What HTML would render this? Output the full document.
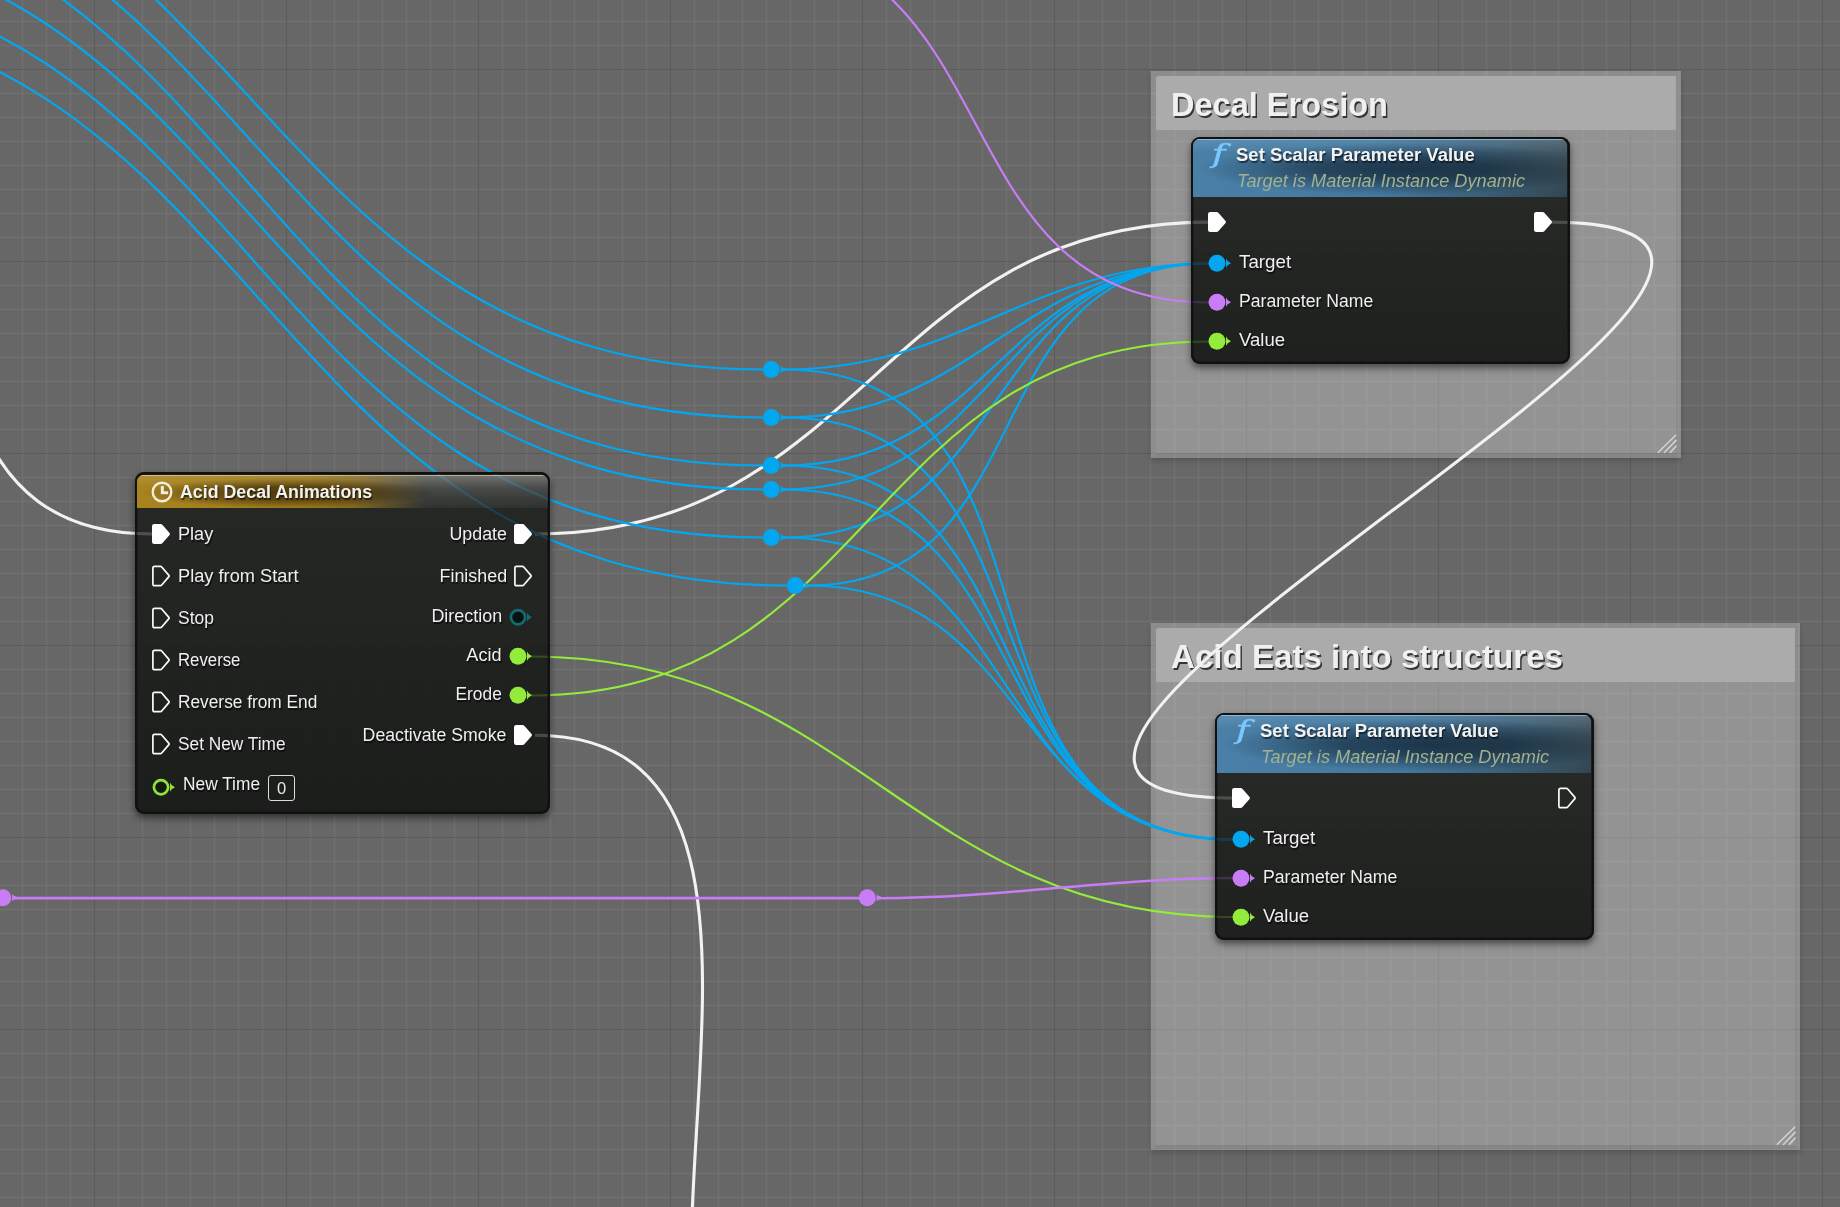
<!DOCTYPE html>
<html><head><meta charset="utf-8"><title>Blueprint</title>
<style>
html,body{margin:0;padding:0}
body{width:1840px;height:1207px;overflow:hidden;position:relative;background-color:#676767;
font-family:"Liberation Sans",sans-serif;
background-image:
linear-gradient(90deg,rgba(90,90,90,0) .4px,#5b5b5b 1px,#5b5b5b 2px,rgba(90,90,90,0) 2.6px),
linear-gradient(180deg,rgba(90,90,90,0) .4px,#5b5b5b 1px,#5b5b5b 2px,rgba(90,90,90,0) 2.6px),
linear-gradient(90deg,rgba(113,113,113,0) .4px,#717171 1px,#717171 2px,rgba(113,113,113,0) 2.6px),
linear-gradient(180deg,rgba(113,113,113,0) .4px,#717171 1px,#717171 2px,rgba(113,113,113,0) 2.6px);
background-size:192px 192px,192px 192px,24px 24px,24px 24px;
background-position:93px 0,0 68px,21px 0,0 20px;}
#w{position:absolute;left:0;top:0}
#w,#w2{fill:none;position:absolute;left:0;top:0}
.cmt{position:absolute;background:rgba(255,255,255,.295);background-clip:padding-box;border:5px solid rgba(255,255,255,.25);border-bottom-color:rgba(255,255,255,.2);border-right-color:rgba(255,255,255,.235);box-shadow:0 3px 5px rgba(0,0,0,.16)}
.ct{will-change:transform;position:absolute;left:0;right:0;top:0;height:53.5px;background:#ababab;border-radius:3px 0 0 0}
.ctt{position:absolute;left:15.3px;top:8.5px;font-size:33.5px;line-height:40px;font-weight:bold;color:#f0f0f0;white-space:nowrap;text-shadow:1.5px 2px 0 rgba(40,40,40,.9);transform-origin:0 50%}
.rs{position:absolute;right:-4.4px;bottom:-2.2px}
.nbg{position:absolute;background:linear-gradient(180deg,rgba(33,36,33,.93),rgba(23,25,23,.94));border-radius:9px;box-shadow:0 0 0 2.5px #101110 inset,0 4px 7px rgba(0,0,0,.5)}
.node{position:absolute;will-change:transform}
.ni{position:absolute}
.title{position:absolute;left:2.5px;right:2.5px;top:2.8px;border-radius:6.5px 6.5px 0 0;overflow:hidden;background:linear-gradient(180deg,rgba(255,255,255,.27),rgba(255,255,255,.13) 55%,rgba(255,255,255,.05))}
.title i{position:absolute;left:0;right:0;top:0;bottom:0;display:block}
.title.gold{height:33.5px}
.title.blue{height:57.5px}
.gold .spill{background:linear-gradient(90deg,#a8841f 0%,#9c7a1e 42%,rgba(150,116,28,.8) 53%,rgba(140,110,30,0) 70%)}
.gold .gloss{left:1%;right:27%;top:10%;bottom:2%;background:radial-gradient(ellipse 50% 50% at 50% 50%,rgba(25,14,0,.6) 0%,rgba(25,14,0,.52) 40%,rgba(25,14,0,.22) 75%,rgba(25,14,0,0) 100%)}
.gold .hl{background:linear-gradient(180deg,rgba(255,240,190,.55) 0,rgba(255,240,190,.55) 1.2px,rgba(255,255,255,.10) 1.4px,rgba(255,255,255,0) 12px)}
.blue .spill{background:linear-gradient(90deg,#4a80a8 0%,#44789e 50%,rgba(60,105,138,.85) 75%,rgba(50,85,108,.55) 100%)}
.blue .gloss{left:1%;right:-12%;top:6%;bottom:4%;background:radial-gradient(ellipse 50% 50% at 50% 50%,rgba(5,15,25,.62) 0%,rgba(5,15,25,.5) 40%,rgba(5,15,25,.2) 75%,rgba(5,15,25,0) 100%)}
.blue .hl{background:linear-gradient(180deg,rgba(150,205,245,.75) 0,rgba(150,205,245,.75) 1.2px,rgba(255,255,255,.10) 1.4px,rgba(255,255,255,0) 14px)}
.tt{position:absolute;z-index:2;font-weight:bold;font-size:18px;line-height:22px;color:#f2f2f2;white-space:nowrap;text-shadow:1px 1.5px 1px rgba(0,0,0,.55);transform-origin:0 50%}
.gold .tt{left:42.8px;top:6.5px}
.clk{position:absolute;z-index:2;left:12.6px;top:5.2px}
.blue .tt{left:43.1px;top:5.2px}
.st{position:absolute;z-index:2;left:44.2px;top:31px;font-style:italic;font-size:18px;line-height:22px;color:#a3b18c;white-space:nowrap;transform-origin:0 50%}
.fi{position:absolute;z-index:2;left:18.5px;top:-3.4px;font-family:"DejaVu Serif",serif;font-style:italic;font-size:26.5px;line-height:36px;color:#7ac8ff;-webkit-text-stroke:.4px #7ac8ff;transform:scaleX(1.38);transform-origin:0 50%}
.row{position:absolute;height:0;white-space:nowrap;left:0;right:0}
.lb{position:absolute;top:-11.4px;font-size:18.3px;line-height:22px;color:#efefef;text-shadow:1px 1.5px 1px rgba(0,0,0,.65);white-space:nowrap}
.row.l .ex{position:absolute;left:16.3px;top:-12px}
.row.l .lb{left:43.6px;transform-origin:0 50%}
.row.l.dl .dp{position:absolute;left:17.3px;top:-9.2px}
.row.l.dl .lb{left:48.2px;top:-12px}
.row.l.nt .lb{left:48.9px;top:-14px}
.row.r .ex{position:absolute;right:17.3px;top:-12px}
.row.r .dp{position:absolute;right:17.3px;top:-9.2px}
.row.r.e .lb{right:43.3px;transform-origin:100% 50%}
.row.r.d .lb{right:48px;top:-12.2px;transform-origin:100% 50%}
.box{position:absolute;left:133.5px;top:-12px;width:25px;height:23.5px;border:1.5px solid #dcdcdc;border-radius:3px;color:#e6e6e6;font-size:16.5px;line-height:25px;text-align:center}
</style></head><body>
<div class="cmt" style="left:1151.0px;top:70.5px;width:520.0px;height:377.0px"><div class="ct"><span class="ctt" style="transform:scaleX(0.9709)">Decal Erosion</span></div><svg class="rs" width="24" height="24" viewBox="0 0 24 24"><path d="M2.3 21.3 L19.7 4.2 M8.6 21.3 L20 9.4 M14.4 21.3 L20 15.2" stroke="#d2d2d2" stroke-width="1.6" stroke-linecap="round" fill="none"/></svg></div><div class="cmt" style="left:1151.0px;top:622.5px;width:639.0px;height:517.5px"><div class="ct"><span class="ctt" style="transform:scaleX(0.9886)">Acid Eats into structures</span></div><svg class="rs" width="24" height="24" viewBox="0 0 24 24"><path d="M2.3 21.3 L19.7 4.2 M8.6 21.3 L20 9.4 M14.4 21.3 L20 15.2" stroke="#d2d2d2" stroke-width="1.6" stroke-linecap="round" fill="none"/></svg></div><svg id="w" width="1840" height="1207" viewBox="0 0 1840 1207"><g id="wg"><path d="M535.0 534.0 C863.6 534.0 880.4 222.1 1209.0 222.1" stroke="#f2f2f2" stroke-width="3.10"/><path d="M1550.0 222.1 C2000.0 222.1 786.0 798.1 1236.0 798.1" stroke="#f2f2f2" stroke-width="3.10"/><path d="M-260.0 -230.0 C132.0 -230.0 -240.0 534.0 152.0 534.0" stroke="#f2f2f2" stroke-width="3.10"/><path d="M535.0 735.3 C906.6 735.3 486.4 1527.0 858.0 1527.0" stroke="#f2f2f2" stroke-width="3.10"/><path d="M-267.0 -178.0 C258.9 -178.0 237.4 369.5 763.3 369.5" stroke="#03a6ef" stroke-width="2.20"/><path d="M-262.0 -137.0 C264.6 -137.0 236.7 417.5 763.3 417.5" stroke="#03a6ef" stroke-width="2.20"/><path d="M-271.0 -105.0 C263.9 -105.0 228.4 465.5 763.3 465.5" stroke="#03a6ef" stroke-width="2.20"/><path d="M-268.5 -66.0 C260.6 -66.0 234.2 489.5 763.3 489.5" stroke="#03a6ef" stroke-width="2.20"/><path d="M-263.0 -24.0 C266.3 -24.0 234.0 537.5 763.3 537.5" stroke="#03a6ef" stroke-width="2.20"/><path d="M-271.0 10.0 C273.6 10.0 242.7 585.5 787.3 585.5" stroke="#03a6ef" stroke-width="2.20"/><path d="M783.3 369.5 C960.5 369.5 1031.8 263.5 1209.0 263.5" stroke="#03a6ef" stroke-width="2.20"/><path d="M783.3 369.5 C1089.9 369.5 926.4 839.5 1233.0 839.5" stroke="#03a6ef" stroke-width="2.20"/><path d="M783.3 417.5 C976.5 417.5 1015.8 263.5 1209.0 263.5" stroke="#03a6ef" stroke-width="2.20"/><path d="M783.3 417.5 C1073.9 417.5 942.4 839.5 1233.0 839.5" stroke="#03a6ef" stroke-width="2.20"/><path d="M783.3 465.5 C992.5 465.5 999.8 263.5 1209.0 263.5" stroke="#03a6ef" stroke-width="2.20"/><path d="M783.3 465.5 C1057.9 465.5 958.4 839.5 1233.0 839.5" stroke="#03a6ef" stroke-width="2.20"/><path d="M783.3 489.5 C1000.5 489.5 991.8 263.5 1209.0 263.5" stroke="#03a6ef" stroke-width="2.20"/><path d="M783.3 489.5 C1049.9 489.5 966.4 839.5 1233.0 839.5" stroke="#03a6ef" stroke-width="2.20"/><path d="M783.3 537.5 C1016.5 537.5 975.8 263.5 1209.0 263.5" stroke="#03a6ef" stroke-width="2.20"/><path d="M783.3 537.5 C1033.9 537.5 982.4 839.5 1233.0 839.5" stroke="#03a6ef" stroke-width="2.20"/><path d="M807.3 585.5 C1048.5 585.5 967.8 263.5 1209.0 263.5" stroke="#03a6ef" stroke-width="2.20"/><path d="M807.3 585.5 C1033.9 585.5 1006.4 839.5 1233.0 839.5" stroke="#03a6ef" stroke-width="2.20"/><path d="M531.0 656.5 C851.8 656.5 912.2 917.0 1233.0 917.0" stroke="#93ec3b" stroke-width="2.20"/><path d="M531.0 695.5 C875.0 695.5 865.0 341.5 1209.0 341.5" stroke="#93ec3b" stroke-width="2.20"/><path d="M741.0 -57.0 C1016.8 -57.0 933.2 302.5 1209.0 302.5" stroke="#c87df6" stroke-width="2.20"/><path d="M14.0 898.2 C296.0 898.2 578.0 898.2 860.0 898.2" stroke="#c87df6" stroke-width="2.80"/><path d="M879.0 898.2 C1003.7 898.2 1108.3 878.0 1233.0 878.0" stroke="#c87df6" stroke-width="2.50"/></g><circle cx="771.3" cy="369.5" r="8.5" fill="#03a6ef"/><path d="M780.6 365.5 q.6 2 4.4 2.8 v2.4 q-3.8 .8 -4.4 2.8z" fill="#03a6ef"/><circle cx="771.3" cy="417.5" r="8.5" fill="#03a6ef"/><path d="M780.6 413.5 q.6 2 4.4 2.8 v2.4 q-3.8 .8 -4.4 2.8z" fill="#03a6ef"/><circle cx="771.3" cy="465.5" r="8.5" fill="#03a6ef"/><path d="M780.6 461.5 q.6 2 4.4 2.8 v2.4 q-3.8 .8 -4.4 2.8z" fill="#03a6ef"/><circle cx="771.3" cy="489.5" r="8.5" fill="#03a6ef"/><path d="M780.6 485.5 q.6 2 4.4 2.8 v2.4 q-3.8 .8 -4.4 2.8z" fill="#03a6ef"/><circle cx="771.3" cy="537.5" r="8.5" fill="#03a6ef"/><path d="M780.6 533.5 q.6 2 4.4 2.8 v2.4 q-3.8 .8 -4.4 2.8z" fill="#03a6ef"/><circle cx="795.3" cy="585.5" r="8.5" fill="#03a6ef"/><path d="M804.6 581.5 q.6 2 4.4 2.8 v2.4 q-3.8 .8 -4.4 2.8z" fill="#03a6ef"/><circle cx="2.8" cy="897.8" r="8.5" fill="#c87df6"/><path d="M12.1 893.8 q.6 2 4.4 2.8 v2.4 q-3.8 .8 -4.4 2.8z" fill="#c87df6"/><circle cx="867.3" cy="897.8" r="8.5" fill="#c87df6"/><path d="M876.6 893.8 q.6 2 4.4 2.8 v2.4 q-3.8 .8 -4.4 2.8z" fill="#c87df6"/></svg>
<div class="nbg" style="left:134.5px;top:472.0px;width:415.5px;height:342px"></div><div class="nbg" style="left:1190.5px;top:136.5px;width:379px;height:227px"></div><div class="nbg" style="left:1214.5px;top:712.5px;width:379px;height:227px"></div><svg id="w2" width="1840" height="1207" viewBox="0 0 1840 1207"><defs><clipPath id="nc"><rect x="136.5" y="474.0" width="411.5" height="338.0" rx="8"/><rect x="1192.5" y="138.5" width="375.0" height="223.0" rx="8"/><rect x="1216.5" y="714.5" width="375.0" height="223.0" rx="8"/></clipPath></defs><g clip-path="url(#nc)" opacity=".17"><use href="#wg"/></g></svg>
<div class="node" style="left:134px;top:472px;width:416px;height:342px"><div class="ni" style="left:.5px;top:0;right:0;bottom:0"><div class="title gold"><i class="spill"></i><i class="gloss"></i><i class="hl"></i><svg class="clk" width="24" height="24" viewBox="0 0 24 24"><circle cx="12" cy="12" r="9.3" fill="none" stroke="#f1ece0" stroke-width="2.4"/><path d="M12.3 6 V12.7 H18.2" fill="none" stroke="#f1ece0" stroke-width="3"/></svg><span class="tt" style="transform:scaleX(0.9883)">Acid Decal Animations</span></div><div class="row l" style="top:62.0px"><svg class="ex" width="20" height="24" viewBox="0 0 20 24"><path d="M3.2 2 H9.6 Q10.6 2 11.3 2.8 L18.6 10.9 Q19.4 12 18.6 13.1 L11.3 21.2 Q10.6 22 9.6 22 H3.2 Q1 22 1 19.8 V4.2 Q1 2 3.2 2Z" fill="#fff"/></svg><span class="lb" style="transform:scaleX(0.9916)">Play</span></div><div class="row l" style="top:104.0px"><svg class="ex" width="20" height="24" viewBox="0 0 20 24"><path d="M3.6 2.4 H9.5 Q10.2 2.4 10.7 3 L17.9 11.4 Q18.4 12 17.9 12.6 L10.7 21 Q10.2 21.6 9.5 21.6 H3.6 Q1.9 21.6 1.9 19.9 V4.1 Q1.9 2.4 3.6 2.4Z" fill="none" stroke="#fafafa" stroke-width="1.7" stroke-linejoin="round"/></svg><span class="lb" style="transform:scaleX(0.9974)">Play from Start</span></div><div class="row l" style="top:146.0px"><svg class="ex" width="20" height="24" viewBox="0 0 20 24"><path d="M3.6 2.4 H9.5 Q10.2 2.4 10.7 3 L17.9 11.4 Q18.4 12 17.9 12.6 L10.7 21 Q10.2 21.6 9.5 21.6 H3.6 Q1.9 21.6 1.9 19.9 V4.1 Q1.9 2.4 3.6 2.4Z" fill="none" stroke="#fafafa" stroke-width="1.7" stroke-linejoin="round"/></svg><span class="lb" style="transform:scaleX(0.9536)">Stop</span></div><div class="row l" style="top:188.0px"><svg class="ex" width="20" height="24" viewBox="0 0 20 24"><path d="M3.6 2.4 H9.5 Q10.2 2.4 10.7 3 L17.9 11.4 Q18.4 12 17.9 12.6 L10.7 21 Q10.2 21.6 9.5 21.6 H3.6 Q1.9 21.6 1.9 19.9 V4.1 Q1.9 2.4 3.6 2.4Z" fill="none" stroke="#fafafa" stroke-width="1.7" stroke-linejoin="round"/></svg><span class="lb" style="transform:scaleX(0.9172)">Reverse</span></div><div class="row l" style="top:230.0px"><svg class="ex" width="20" height="24" viewBox="0 0 20 24"><path d="M3.6 2.4 H9.5 Q10.2 2.4 10.7 3 L17.9 11.4 Q18.4 12 17.9 12.6 L10.7 21 Q10.2 21.6 9.5 21.6 H3.6 Q1.9 21.6 1.9 19.9 V4.1 Q1.9 2.4 3.6 2.4Z" fill="none" stroke="#fafafa" stroke-width="1.7" stroke-linejoin="round"/></svg><span class="lb" style="transform:scaleX(0.9459)">Reverse from End</span></div><div class="row l" style="top:272.0px"><svg class="ex" width="20" height="24" viewBox="0 0 20 24"><path d="M3.6 2.4 H9.5 Q10.2 2.4 10.7 3 L17.9 11.4 Q18.4 12 17.9 12.6 L10.7 21 Q10.2 21.6 9.5 21.6 H3.6 Q1.9 21.6 1.9 19.9 V4.1 Q1.9 2.4 3.6 2.4Z" fill="none" stroke="#fafafa" stroke-width="1.7" stroke-linejoin="round"/></svg><span class="lb" style="transform:scaleX(0.9455)">Set New Time</span></div><div class="row l dl nt" style="top:315.0px"><svg class="dp" width="24" height="19" viewBox="0 0 24 19"><circle cx="9" cy="9.2" r="7.1" fill="#141a10" stroke="#8fe33a" stroke-width="2.7"/><path d="M18 4.6 Q19 7.6 23 9.2 Q19 10.8 18 13.8Z" fill="#8fe33a"/></svg><span class="lb" style="transform:scaleX(0.9478)">New Time</span><span class="box">0</span></div><div class="row r e" style="top:62.0px"><span class="lb" style="transform:scaleX(0.9761)">Update</span><svg class="ex" width="20" height="24" viewBox="0 0 20 24"><path d="M3.2 2 H9.6 Q10.6 2 11.3 2.8 L18.6 10.9 Q19.4 12 18.6 13.1 L11.3 21.2 Q10.6 22 9.6 22 H3.2 Q1 22 1 19.8 V4.2 Q1 2 3.2 2Z" fill="#fff"/></svg></div><div class="row r e" style="top:104.0px"><span class="lb" style="transform:scaleX(0.9787)">Finished</span><svg class="ex" width="20" height="24" viewBox="0 0 20 24"><path d="M3.6 2.4 H9.5 Q10.2 2.4 10.7 3 L17.9 11.4 Q18.4 12 17.9 12.6 L10.7 21 Q10.2 21.6 9.5 21.6 H3.6 Q1.9 21.6 1.9 19.9 V4.1 Q1.9 2.4 3.6 2.4Z" fill="none" stroke="#fafafa" stroke-width="1.7" stroke-linejoin="round"/></svg></div><div class="row r d" style="top:145.6px"><span class="lb" style="transform:scaleX(0.9805)">Direction</span><svg class="dp" width="24" height="19" viewBox="0 0 24 19"><circle cx="9" cy="9.2" r="7.1" fill="#0b1011" stroke="#0d6d70" stroke-width="2.7"/><path d="M18 4.6 Q19 7.6 23 9.2 Q19 10.8 18 13.8Z" fill="#0d6d70"/></svg></div><div class="row r d" style="top:184.5px"><span class="lb" style="transform:scaleX(0.9916)">Acid</span><svg class="dp" width="24" height="19" viewBox="0 0 24 19"><circle cx="9" cy="9.2" r="8.45" fill="#93ec3b"/><path d="M18 4.6 Q19 7.6 23 9.2 Q19 10.8 18 13.8Z" fill="#93ec3b"/></svg></div><div class="row r d" style="top:223.5px"><span class="lb" style="transform:scaleX(0.9481)">Erode</span><svg class="dp" width="24" height="19" viewBox="0 0 24 19"><circle cx="9" cy="9.2" r="8.45" fill="#93ec3b"/><path d="M18 4.6 Q19 7.6 23 9.2 Q19 10.8 18 13.8Z" fill="#93ec3b"/></svg></div><div class="row r e" style="top:263.0px"><span class="lb" style="transform:scaleX(0.9690)">Deactivate Smoke</span><svg class="ex" width="20" height="24" viewBox="0 0 20 24"><path d="M3.2 2 H9.6 Q10.6 2 11.3 2.8 L18.6 10.9 Q19.4 12 18.6 13.1 L11.3 21.2 Q10.6 22 9.6 22 H3.2 Q1 22 1 19.8 V4.2 Q1 2 3.2 2Z" fill="#fff"/></svg></div></div></div><div class="node" style="left:1190px;top:136px;width:380px;height:228px"><div class="ni" style="left:.5px;top:.5px;right:.5px;bottom:.5px"><div class="title blue"><i class="spill"></i><i class="gloss"></i><i class="hl"></i><span class="fi">f</span><span class="tt" style="transform:scaleX(1.0282)">Set Scalar Parameter Value</span><span class="st" style="transform:scaleX(1.0089)">Target is Material Instance Dynamic</span></div><div class="row l" style="top:85.6px"><svg class="ex" width="20" height="24" viewBox="0 0 20 24"><path d="M3.2 2 H9.6 Q10.6 2 11.3 2.8 L18.6 10.9 Q19.4 12 18.6 13.1 L11.3 21.2 Q10.6 22 9.6 22 H3.2 Q1 22 1 19.8 V4.2 Q1 2 3.2 2Z" fill="#fff"/></svg></div><div class="row r e" style="top:85.6px;right:-.6px"><svg class="ex" width="20" height="24" viewBox="0 0 20 24"><path d="M3.2 2 H9.6 Q10.6 2 11.3 2.8 L18.6 10.9 Q19.4 12 18.6 13.1 L11.3 21.2 Q10.6 22 9.6 22 H3.2 Q1 22 1 19.8 V4.2 Q1 2 3.2 2Z" fill="#fff"/></svg></div><div class="row l dl" style="top:126.3px"><svg class="dp" width="24" height="19" viewBox="0 0 24 19"><circle cx="9" cy="9.2" r="8.45" fill="#03a6ef"/><path d="M18 4.6 Q19 7.6 23 9.2 Q19 10.8 18 13.8Z" fill="#03a6ef"/></svg><span class="lb" style="transform:scaleX(1.0263)">Target</span></div><div class="row l dl" style="top:165.2px"><svg class="dp" width="24" height="19" viewBox="0 0 24 19"><circle cx="9" cy="9.2" r="8.45" fill="#c87df6"/><path d="M18 4.6 Q19 7.6 23 9.2 Q19 10.8 18 13.8Z" fill="#c87df6"/></svg><span class="lb" style="transform:scaleX(0.9653)">Parameter Name</span></div><div class="row l dl" style="top:204.2px"><svg class="dp" width="24" height="19" viewBox="0 0 24 19"><circle cx="9" cy="9.2" r="8.45" fill="#93ec3b"/><path d="M18 4.6 Q19 7.6 23 9.2 Q19 10.8 18 13.8Z" fill="#93ec3b"/></svg><span class="lb" style="transform:scaleX(1.0166)">Value</span></div></div></div><div class="node" style="left:1214px;top:712px;width:380px;height:228px"><div class="ni" style="left:.5px;top:.5px;right:.5px;bottom:.5px"><div class="title blue"><i class="spill"></i><i class="gloss"></i><i class="hl"></i><span class="fi">f</span><span class="tt" style="transform:scaleX(1.0282)">Set Scalar Parameter Value</span><span class="st" style="transform:scaleX(1.0089)">Target is Material Instance Dynamic</span></div><div class="row l" style="top:85.6px"><svg class="ex" width="20" height="24" viewBox="0 0 20 24"><path d="M3.2 2 H9.6 Q10.6 2 11.3 2.8 L18.6 10.9 Q19.4 12 18.6 13.1 L11.3 21.2 Q10.6 22 9.6 22 H3.2 Q1 22 1 19.8 V4.2 Q1 2 3.2 2Z" fill="#fff"/></svg></div><div class="row r e" style="top:85.6px;right:-.6px"><svg class="ex" width="20" height="24" viewBox="0 0 20 24"><path d="M3.6 2.4 H9.5 Q10.2 2.4 10.7 3 L17.9 11.4 Q18.4 12 17.9 12.6 L10.7 21 Q10.2 21.6 9.5 21.6 H3.6 Q1.9 21.6 1.9 19.9 V4.1 Q1.9 2.4 3.6 2.4Z" fill="none" stroke="#fafafa" stroke-width="1.7" stroke-linejoin="round"/></svg></div><div class="row l dl" style="top:126.3px"><svg class="dp" width="24" height="19" viewBox="0 0 24 19"><circle cx="9" cy="9.2" r="8.45" fill="#03a6ef"/><path d="M18 4.6 Q19 7.6 23 9.2 Q19 10.8 18 13.8Z" fill="#03a6ef"/></svg><span class="lb" style="transform:scaleX(1.0263)">Target</span></div><div class="row l dl" style="top:165.2px"><svg class="dp" width="24" height="19" viewBox="0 0 24 19"><circle cx="9" cy="9.2" r="8.45" fill="#c87df6"/><path d="M18 4.6 Q19 7.6 23 9.2 Q19 10.8 18 13.8Z" fill="#c87df6"/></svg><span class="lb" style="transform:scaleX(0.9653)">Parameter Name</span></div><div class="row l dl" style="top:204.2px"><svg class="dp" width="24" height="19" viewBox="0 0 24 19"><circle cx="9" cy="9.2" r="8.45" fill="#93ec3b"/><path d="M18 4.6 Q19 7.6 23 9.2 Q19 10.8 18 13.8Z" fill="#93ec3b"/></svg><span class="lb" style="transform:scaleX(1.0166)">Value</span></div></div></div></body></html>
